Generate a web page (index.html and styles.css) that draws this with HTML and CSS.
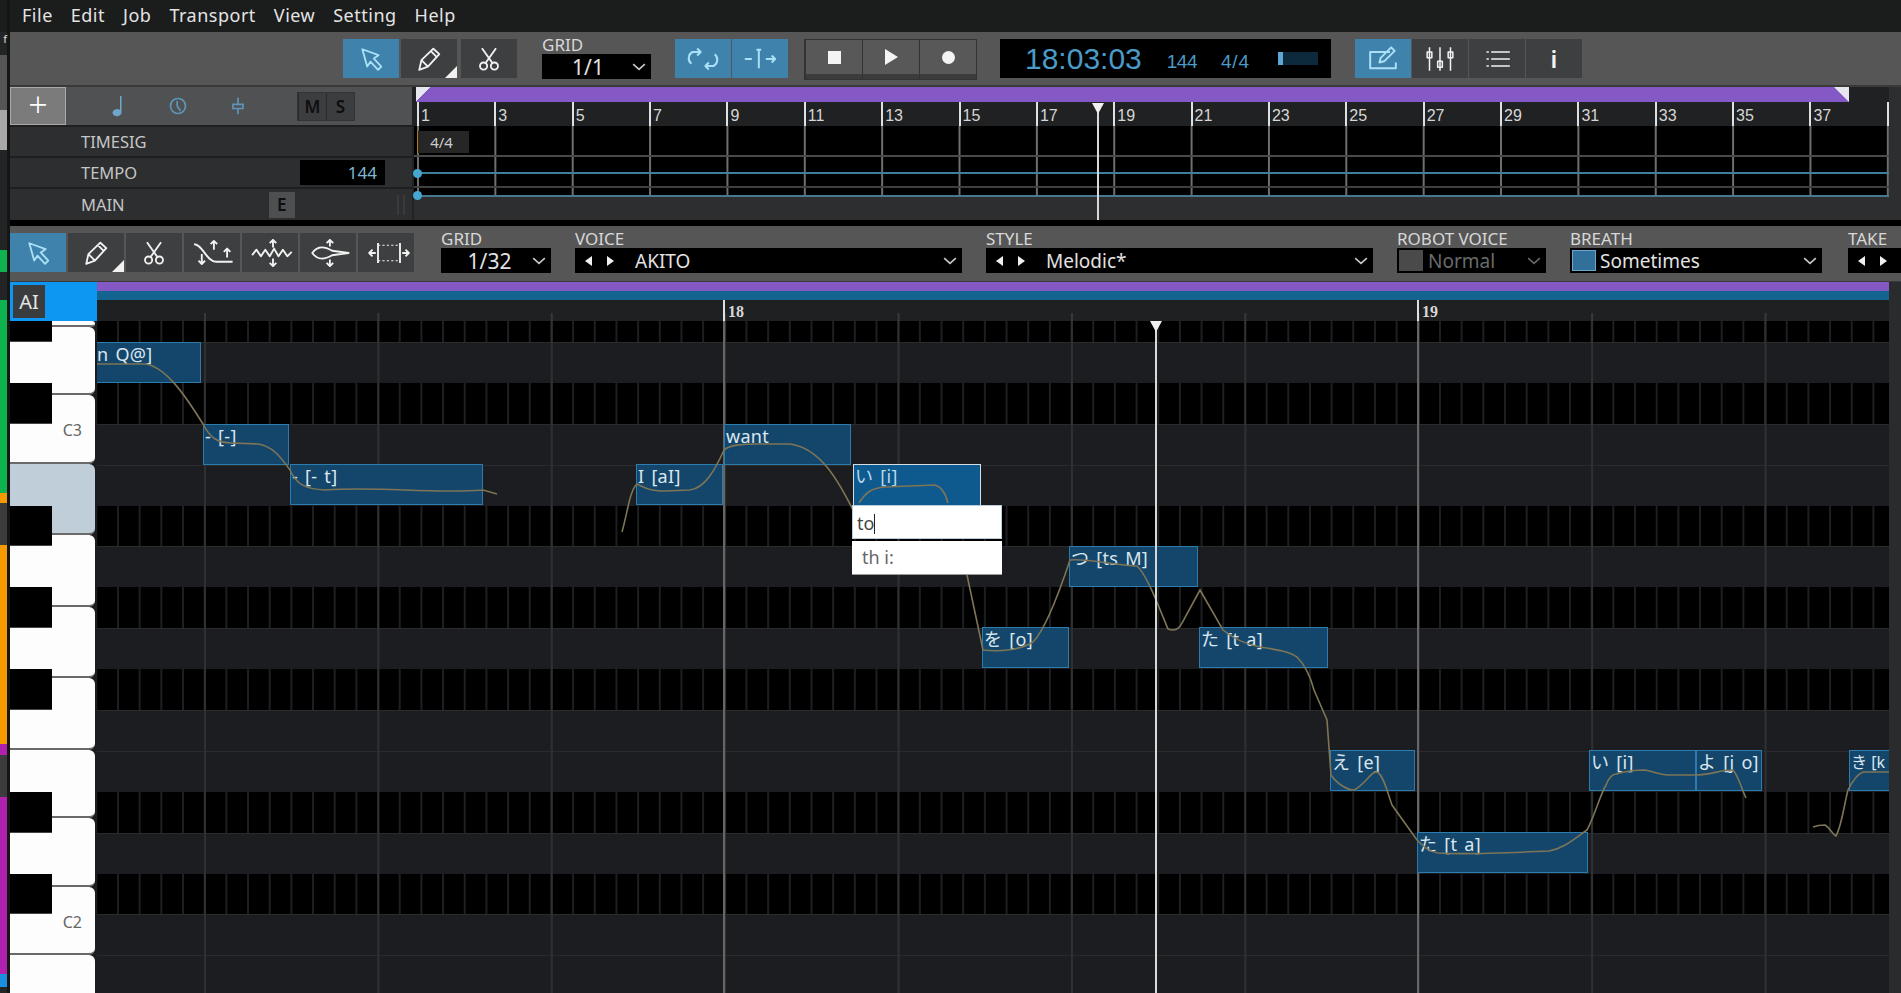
FILE: index.html
```html
<!DOCTYPE html>
<html lang="en">
<head>
    <meta charset="UTF-8">
    <meta name="viewport" content="width=device-width, initial-scale=1.0">
    <title>Piano Roll</title>
    <link rel="stylesheet" href="styles.css">
</head>
<body>
    <svg class="defs" width="0" height="0">
        <symbol id="i-arrow" viewBox="0 0 24 24"><path d="M4 3 19 8.500 14.500 11.500 21.500 19 18.500 22 11.500 14.500 8.500 19Z"/></symbol>
        <symbol id="i-pencil" viewBox="0 0 24 24"><path d="M3 22 5 13 16 2.500 21.500 7.500 11 19ZM5 13 11 19M14 5 19 10"/></symbol>
        <symbol id="i-scissors" viewBox="0 0 24 24"><circle cx="7" cy="18.500" r="3.300"/><circle cx="17" cy="18.500" r="3.300"/><path d="M9 15.500 18.500 2M15 15.500 5.500 2"/></symbol>
        <symbol id="i-chev" viewBox="0 0 12 8"><path d="M1 1.500 6 6 11 1.500"/></symbol>
    </svg>
    <div class="app">
        <div class="strip">
            <div class="s-dark s1"></div>
            <div class="s-dark s2">f</div>
            <div class="s-grey s3"></div>
            <div class="s-light s4"></div>
            <div class="s-dark s5"></div>
            <div class="s-green s6"></div>
            <div class="s-dark s7"></div>
            <div class="s-green s8"></div>
            <div class="s-orange s9"></div>
            <div class="s-mid s10"></div>
            <div class="s-orange s11"></div>
            <div class="s-magenta s12"></div>
            <div class="s-mid s10"></div>
            <div class="s-magenta s13"></div>
            <div class="s-blue s14"></div>
            <div class="s-dark s15"></div>
        </div>
        <div class="main">
            <div class="menu">
                <span>File</span><span>Edit</span><span>Job</span><span>Transport</span><span>View</span><span>Setting</span><span>Help</span>
            </div>

            <div class="toolbar">
                <div class="btn-group tools-top">
                    <div class="btn on"><svg class="ico"><use href="#i-arrow"/></svg></div>
                    <div class="btn corner"><svg class="ico"><use href="#i-pencil"/></svg></div>
                    <div class="btn gap-l"><svg class="ico"><use href="#i-scissors"/></svg></div>
                </div>
                <div class="field f-grid-top">
                    <label>GRID</label>
                    <div class="select center"><span>1/1</span><svg class="chev"><use href="#i-chev"/></svg></div>
                </div>
                <div class="btn-group loop">
                    <div class="btn on"><svg class="ico wide" viewBox="0 0 36 24"><path d="M8 16a6 6 0 0 1 1-10h7M13 3l3 3-3 3M28 8a6 6 0 0 1-1 10h-7M23 15l-3 3 3 3"/></svg></div>
                    <div class="btn on"><svg class="ico wide" viewBox="0 0 36 24"><path d="M5 12h6M17 4v16M15 4h4M23 12h8M28 9l3 3-3 3"/></svg></div>
                </div>
                <div class="transport">
                    <div class="tbtn"><i class="t-stop"></i></div>
                    <div class="tbtn"><i class="t-play"></i></div>
                    <div class="tbtn"><i class="t-rec"></i></div>
                </div>
                <div class="display">
                    <span class="clock">18:03:03</span>
                    <span class="small tempo-val">144</span>
                    <span class="small">4/4</span>
                    <div class="meter"><i></i></div>
                </div>
                <div class="btn-group panels">
                    <div class="btn on"><svg class="ico wide" viewBox="0 0 36 24"><path d="M24 6H7v14h22v-5M15 15l1-4 9-9 3 3-9 9Z"/></svg></div>
                    <div class="btn"><svg class="ico wide thin" viewBox="0 0 36 24"><path d="M9 2v20M18 2v20M27 2v20M7 6h4v5H7zM16 14h4v5h-4zM25 6h4v5h-4z"/></svg></div>
                    <div class="btn"><svg class="ico wide thin" viewBox="0 0 36 24"><path d="M13 6h16M13 12h16M13 18h16M9 6h2M9 12h2M9 18h2"/></svg></div>
                    <div class="btn info">i</div>
                </div>
            </div>

            <div class="tracks">
                <div class="track-head">
                    <div class="head-top">
                        <div class="add">+</div>
                        <svg class="hicon h-note" viewBox="0 0 16 24"><path class="fill" d="M10 2h1.500v17a4.500 3.500 0 1 1-1.500-3z"/></svg>
                        <svg class="hicon h-clock" viewBox="0 0 24 24"><circle cx="12" cy="12" r="9"/><path d="M11 6v6l4 6"/></svg>
                        <svg class="hicon h-fader" viewBox="0 0 24 24"><path d="M12 2v7M12 16v6M6 10h12v5H6z"/></svg>
                        <div class="ms"><span>M</span><span>S</span></div>
                    </div>
                    <div class="trow"><span>TIMESIG</span></div>
                    <div class="trow"><span>TEMPO</span><div class="tempo-box">144</div></div>
                    <div class="trow last"><span>MAIN</span><div class="e-btn">E</div><div class="grip"></div></div>
                </div>
                <div class="timeline">
                    <div class="loop-bar"></div>
                    <div class="bars">
                        <span>1</span><span>3</span><span>5</span><span>7</span><span>9</span><span>11</span><span>13</span><span>15</span><span>17</span><span>19</span><span>21</span><span>23</span><span>25</span><span>27</span><span>29</span><span>31</span><span>33</span><span>35</span><span>37</span><span></span>
                    </div>
                    <div class="lanes">
                        <div class="lane sig"><div class="sig-box">4/4</div></div>
                        <div class="lane tempo-lane"><i class="dot"></i></div>
                        <div class="lane main-lane"><i class="dot"></i></div>
                    </div>
                    <div class="below"></div>
                    <div class="playhead ph-top"></div>
                </div>
                <div class="tl-rail"></div>
            </div>

            <div class="black-gap"></div>

            <div class="editbar">
                <div class="btn-group tools">
                    <div class="btn on"><svg class="ico"><use href="#i-arrow"/></svg></div>
                    <div class="btn corner"><svg class="ico"><use href="#i-pencil"/></svg></div>
                    <div class="btn"><svg class="ico"><use href="#i-scissors"/></svg></div>
                    <div class="btn"><svg class="ico wide" viewBox="0 0 40 24"><path d="M1 4C9 4 12 20 21 20H36M19 9V2M16 4l3-3 3 3M31 16V9M28 11l3-3 3 3M8 13v8M5 19l3 3 3-3"/></svg></div>
                    <div class="btn"><svg class="ico wide" viewBox="0 0 40 24"><path d="M1 14 5 9 9 15 13 9 17 15 21 8 25 15 29 9 33 15 37 11M20 7V1M17 3l3-3 3 3M20 17v6M17 21l3 3 3-3"/></svg></div>
                    <div class="btn"><svg class="ico wide" viewBox="0 0 40 24"><path d="M3 12C8 5 14 6 21 10L36 12 21 14C14 18 8 19 3 12ZM19 6V1M16 3l3-3 3 3M19 18v5M16 21l3 3 3-3"/></svg></div>
                    <div class="btn"><svg class="ico wide" viewBox="0 0 40 24"><path d="M10 3v18M30 3v18M2 12h6M5 9l-3 3 3 3M32 12h6M35 9l3 3-3 3"/><path class="dash" d="M10 5h20M10 19h20"/></svg></div>
                </div>
                <div class="field f-grid"><label>GRID</label><div class="select center"><span>1/32</span><svg class="chev"><use href="#i-chev"/></svg></div></div>
                <div class="field f-voice"><label>VOICE</label><div class="select"><i class="tri l"></i><i class="tri r"></i><span>AKITO</span><svg class="chev"><use href="#i-chev"/></svg></div></div>
                <div class="field f-voice"><label>STYLE</label><div class="select"><i class="tri l"></i><i class="tri r"></i><span>Melodic*</span><svg class="chev"><use href="#i-chev"/></svg></div></div>
                <div class="field f-robot"><label>ROBOT VOICE</label><div class="select off"><b class="check"></b><span>Normal</span><svg class="chev"><use href="#i-chev"/></svg></div></div>
                <div class="field f-breath"><label>BREATH</label><div class="select cb"><b class="check blue"></b><span>Sometimes</span><svg class="chev"><use href="#i-chev"/></svg></div></div>
                <div class="field f-take"><label>TAKE</label><div class="select"><i class="tri l"></i><i class="tri r"></i></div></div>
            </div>

            <div class="roll">
                <div class="keys-col">
                    <div class="ai-box"><span>AI</span></div>
                    <div class="piano">
                        <div class="key sliver"></div>
                        <div class="key short"></div>
                        <div class="key short"><span>C3</span></div>
                        <div class="key tall picked"></div>
                        <div class="key tall"></div>
                        <div class="key tall"></div>
                        <div class="key tall"></div>
                        <div class="key short"></div>
                        <div class="key short"></div>
                        <div class="key short"><span>C2</span></div>
                        <div class="key short"></div>
                        <div class="black-keys">
                            <div class="bk"></div><div></div><div class="bk"></div><div></div><div></div><div class="bk"></div><div></div><div class="bk"></div><div></div><div class="bk"></div><div></div><div></div><div class="bk"></div><div></div><div class="bk"></div>
                        </div>
                    </div>
                </div>
                <div class="roll-body">
                    <div class="r-purple"></div>
                    <div class="r-blue"></div>
                    <div class="r-ruler">
                        <span class="mark m18">18</span>
                        <span class="mark m19">19</span>
                    </div>
                    <div class="canvas">
                        <div class="row top black"></div>
                        <div class="row"></div>
                        <div class="row black"></div>
                        <div class="row"></div>
                        <div class="row"></div>
                        <div class="row black"></div>
                        <div class="row"></div>
                        <div class="row black"></div>
                        <div class="row"></div>
                        <div class="row black"></div>
                        <div class="row"></div>
                        <div class="row"></div>
                        <div class="row black"></div>
                        <div class="row"></div>
                        <div class="row black"></div>
                        <div class="row"></div>
                        <div class="row"></div>
                        <div class="beats"></div>
                        <div class="bar-line b18"></div>
                        <div class="bar-line b19"></div>

                        <div class="note n1">n Q@]</div>
                        <div class="note n2">- [-]</div>
                        <div class="note n3">- [- t]</div>
                        <div class="note n4">I [aI]</div>
                        <div class="note n5">want</div>
                        <div class="note n6 sel">い [i]</div>
                        <div class="note n7">を [o]</div>
                        <div class="note n8">つ [ts M]</div>
                        <div class="note n9">た [t a]</div>
                        <div class="note n10">え [e]</div>
                        <div class="note n11">た [t a]</div>
                        <div class="note n12">い [i]</div>
                        <div class="note n13">よ [j o]</div>
                        <div class="note n14">き [k</div>

                        <svg class="pitch" viewBox="97 321 1792 672">
                            <path d="M97 364H145C165 366 185 395 203 424C210 438 218 443 232 443L258 444C272 446 280 456 290 470C296 484 305 489 325 490C380 486 430 494 483 490L497 494"/>
                            <path d="M622 532C628 510 630 490 637 484C645 488 650 491 665 491L690 490C705 488 715 470 724 450C730 445 740 444 760 444H790C820 448 838 480 853 510"/>
                            <path d="M859 503C866 492 872 488 885 487L935 485C942 487 946 495 948 503"/>
                            <path d="M967 575 983 650C1000 652 1020 650 1033 642C1045 630 1060 590 1070 560C1085 558 1120 566 1137 566C1147 575 1158 605 1168 629C1175 632 1180 628 1182 623L1200 590 1223 630C1235 640 1250 645 1260 647C1280 650 1290 652 1297 657C1305 665 1310 675 1314 690L1327 720 1331 775C1338 785 1348 790 1354 790C1365 785 1372 770 1377 772C1384 775 1388 795 1392 805L1417 840C1425 848 1430 852 1438 853C1470 855 1520 852 1549 851C1565 848 1575 838 1587 830C1595 815 1600 795 1606 785C1610 775 1614 774 1616 774C1630 770 1640 770 1645 770C1655 772 1660 775 1668 775H1695C1710 775 1720 770 1733 770C1738 775 1742 790 1746 798"/>
                            <path d="M1813 827C1818 825 1822 825 1825 825C1830 828 1833 835 1836 836C1842 825 1844 805 1848 790C1853 780 1858 774 1863 772H1890"/>
                        </svg>

                        <div class="lyric-input">
                            <div class="lyric-edit">to<i></i></div>
                            <div class="lyric-hint">th i:</div>
                        </div>
                        <div class="playhead ph-roll"></div>
                    </div>
                </div>
                <div class="roll-rail"></div>
            </div>
        </div>
    </div>
</body>
</html>
```
FILE: styles.css
```css
*{
    margin: 0;
    padding: 0;
    box-sizing: border-box;
}
html,body{
    height: 100%;
    overflow: hidden;
    background-color: #1b1c1c;
}
body{
    font-family: "Noto Sans", "Noto Sans CJK JP", sans-serif;
    color: #d0d0d0;
}
.defs{
    position: absolute;
}
.app{
    display: flex;
    width: 1901px;
    height: 993px;
    overflow: hidden;
}

/* left colour strip */
.strip{
    width: 10px;
    flex: none;
    display: flex;
    flex-direction: column;
    background-color: #141515;
}
.strip div{
    width: 7px;
}
.s-dark{ background-color: #232425; }
.s-grey{ background-color: #555; }
.s-light{ background-color: #a8a8a8; }
.s-green{ background-color: #0eb350; }
.s-orange{ background-color: #f59b00; }
.s-magenta{ background-color: #b022ad; }
.s-blue{ background-color: #1a8fe0; }
.s-mid{ background-color: #3c3c3c; }
.s1{ height: 32px; background-color: #1b1c1c; }
.s2{ height: 23px; font-size: 11px; line-height: 14px; text-align: right; color: #ddd; }
.s3{ height: 55px; }
.s4{ height: 40px; }
.s5{ height: 100px; }
.s6{ height: 22px; }
.s7{ height: 28px; }
.s8{ height: 193px; }
.s9{ height: 10px; }
.s10{ height: 42px; }
.s11{ height: 199px; }
.s12{ height: 11px; }
.s13{ height: 177px; }
.s14{ height: 13px; }
.s15{ flex: 1; }

.main{
    flex: 1;
    min-width: 0;
    display: flex;
    flex-direction: column;
}

/* menu */
.menu{
    height: 32px;
    flex: none;
    display: flex;
    gap: 18px;
    padding: 0 0 2px 12px;
    align-items: center;
    font-size: 18px;
    letter-spacing: 0.5px;
    color: #e4e4e4;
    background-color: #1b1c1c;
}

/* buttons */
.toolbar,.editbar{
    display: flex;
    flex: none;
    align-items: flex-start;
    padding-top: 7px;
    background-color: #565656;
}
.toolbar{
    height: 53px;
    padding-left: 333px;
}
.btn-group{
    display: flex;
    gap: 2px;
}
.btn{
    width: 56px;
    height: 39px;
    background-color: #3e3f40;
    color: #f2f2f2;
    position: relative;
    display: flex;
    align-items: center;
    justify-content: center;
}
.btn.on{
    background-color: #3f83ad;
    color: #a9e0f5;
}
.btn.gap-l{
    margin-left: 2px;
}
.btn.corner::after{
    content: "";
    position: absolute;
    right: 0;
    bottom: 0;
    border-left: 12px solid transparent;
    border-bottom: 12px solid #f2f2f2;
}
.ico{
    width: 26px;
    height: 26px;
    fill: none;
    stroke: currentColor;
    stroke-width: 1.7;
    stroke-linejoin: round;
}
.ico.wide{
    width: 44px;
    height: 28px;
}
.tools .ico.wide{
    margin-left: 6px;
}
.ico.thin{
    stroke-width: 1.3;
}
.ico .dash{
    stroke-width: 1;
    stroke-dasharray: 2 2;
}
.btn.info{
    font-size: 24px;
    font-weight: 600;
}

/* fields */
.field{
    display: flex;
    flex-direction: column;
    flex: none;
    margin-top: -3px;
}
.field label{
    height: 18px;
    line-height: 18px;
    font-size: 17px;
    color: #d8d8d8;
}
.select{
    height: 25px;
    background-color: #000;
    color: #e2e2e2;
    font-size: 19px;
    display: flex;
    align-items: center;
    padding: 0 5px 0 10px;
    gap: 8px;
    overflow: hidden;
}
.select .chev{
    width: 14px;
    height: 10px;
    margin-left: auto;
    flex: none;
    fill: none;
    stroke: #c8c8c8;
    stroke-width: 1.4;
}
.select.center{
    font-size: 21px;
}
.select.center span{
    flex: 1;
    text-align: center;
    padding-left: 4px;
}
.f-grid-top .select.center span{
    padding-left: 0;
}
.select.off{
    color: #6b6b6b;
    padding-left: 2px;
    gap: 5px;
}
.select.off .chev{
    stroke: #666;
}
.select.cb{
    padding-left: 2px;
    gap: 4px;
}
.tri{
    width: 0;
    height: 0;
    flex: none;
    border-top: 5px solid transparent;
    border-bottom: 5px solid transparent;
    margin-right: 7px;
}
.tri.l{
    border-right: 7px solid #f0f0f0;
}
.tri.r{
    border-left: 7px solid #f0f0f0;
    margin-right: 13px;
}
.check{
    width: 24px;
    height: 21px;
    flex: none;
    background-color: #4a4a4a;
}
.check.blue{
    background-color: #31709a;
    border: 1px solid #6aa9cc;
}
.f-grid-top{
    width: 109px;
    margin-left: 25px;
}
.btn-group.loop{
    margin-left: 24px;
    gap: 1px;
}
.btn-group.panels{
    margin-left: 24px;
    gap: 1px;
}
.transport{
    display: flex;
    margin-left: 16px;
    border: 1px solid #333;
}
.tbtn{
    width: 57px;
    height: 39px;
    padding-bottom: 5px;
    background: linear-gradient(#585858 0 86%, #3c3c3c 86%);
    border-left: 1px solid #333;
    display: flex;
    align-items: center;
    justify-content: center;
}
.t-stop{
    width: 13px;
    height: 13px;
    background-color: #f4f4f4;
}
.t-play{
    border-left: 13px solid #f4f4f4;
    border-top: 8px solid transparent;
    border-bottom: 8px solid transparent;
}
.t-rec{
    width: 13px;
    height: 13px;
    border-radius: 50%;
    background-color: #f4f4f4;
}
.display{
    width: 331px;
    height: 39px;
    margin-left: 23px;
    background-color: #000;
    display: flex;
    align-items: center;
    color: #4a9bc7;
    padding-left: 25px;
}
.clock{
    font-family: "Liberation Sans", sans-serif;
    font-size: 30px;
    margin-right: 25px;
}
.small{
    font-family: "Liberation Sans", sans-serif;
    font-size: 19px;
    padding-top: 6px;
    margin-right: 24px;
}
.tempo-val{
    letter-spacing: -0.5px;
}
.small + .small{
    letter-spacing: 0.8px;
}
.meter{
    width: 40px;
    height: 13px;
    margin-left: 4px;
    background-color: #0d2a3d;
}
.meter i{
    display: block;
    width: 5px;
    height: 13px;
    background-color: #5ba7cf;
}

/* track list and timeline */
.tracks{
    height: 135px;
    flex: none;
    display: flex;
    border-top: 2px solid #3a3a3a;
}
.track-head{
    width: 404px;
    flex: none;
    display: flex;
    flex-direction: column;
    background-color: #2c2e2f;
    border-right: 2px solid #222;
}
.head-top{
    height: 38px;
    display: flex;
    align-items: center;
    background-color: #505152;
    position: relative;
}
.add{
    width: 56px;
    height: 38px;
    background-color: #7b7b7b;
    border: 1px solid #aaa;
    color: #fff;
    font-size: 34px;
    line-height: 32px;
    font-weight: 300;
    text-align: center;
}
.hicon{
    width: 20px;
    height: 24px;
    fill: none;
    stroke: #5f95ba;
    stroke-width: 2;
    flex: none;
}
.hicon .fill{
    fill: #6ea6cc;
    stroke: none;
}
.h-note{ margin-left: 42px; }
.h-clock{ margin-left: 40px; }
.h-fader{ margin-left: 40px; }
.ms{
    display: flex;
    margin-left: 49px;
    background-color: #3c3d3e;
    border: 1px solid #333;
}
.ms span{
    width: 28px;
    height: 27px;
    line-height: 27px;
    text-align: center;
    color: #0e0e0e;
    font-size: 17px;
    font-weight: 600;
    border-left: 1px solid #2a2a2a;
}
.trow{
    height: 31px;
    display: flex;
    align-items: center;
    padding-left: 71px;
    font-size: 16.500px;
    color: #c6c6c6;
    border-top: 2px solid #1e1f20;
    position: relative;
}
.trow.last{
    height: 33px;
}
.tempo-box{
    width: 85px;
    height: 25px;
    margin-left: auto;
    margin-right: 27px;
    background-color: #000;
    color: #7fb8d4;
    font-size: 17px;
    line-height: 25px;
    text-align: right;
    padding-right: 8px;
}
.e-btn{
    width: 26px;
    height: 26px;
    margin-left: 144px;
    background-color: #4e4f50;
    color: #0e0e0e;
    font-size: 17px;
    font-weight: 600;
    line-height: 26px;
    text-align: center;
}
.grip{
    width: 8px;
    height: 20px;
    margin-left: auto;
    margin-right: 7px;
    border-left: 2px solid #3a3a3a;
    border-right: 2px solid #3a3a3a;
}
.timeline{
    width: 1475px;
    flex: none;
    position: relative;
    display: flex;
    flex-direction: column;
    background-color: #202122;
}
.loop-bar{
    height: 15px;
    width: 1433px;
    margin-left: 2px;
    background: linear-gradient(135deg, #e6e6ee 0 10px, #8459c5 10px);
    position: relative;
    flex: none;
}
.loop-bar::after{
    content: "";
    position: absolute;
    right: 0;
    top: 0;
    border-left: 15px solid transparent;
    border-top: 15px solid #e6e6ee;
}
.bars{
    height: 24px;
    flex: none;
    display: flex;
    padding-left: 3px;
    background-color: #202122;
}
.bars span{
    width: 77.37px;
    flex: none;
    border-left: 2px solid #e0e0e0;
    padding-left: 2px;
    font-family: "Liberation Sans", sans-serif;
    font-size: 16px;
    line-height: 27px;
    color: #d6d6d6;
}
.lanes{
    flex: none;
    background-color: #000;
    position: relative;
}
.lanes::before{
    content: "";
    position: absolute;
    inset: 0;
    background: linear-gradient(90deg, #6f6f6f 0 2px, transparent 2px) 3px 0 / 77.37px 100%;
}
.lane{
    position: relative;
}
.lane.sig{
    height: 31px;
    padding-top: 5px;
    border-bottom: 2px solid #4a4a4a;
}
.lane.tempo-lane{
    height: 31px;
    border-bottom: 2px solid #3f3f3f;
    background: linear-gradient(transparent 15px, #3f7f9e 15px 17px, transparent 17px);
}
.lane.main-lane{
    height: 9px;
    border-bottom: 2px solid #47788f;
}
.sig-box{
    width: 52px;
    height: 22px;
    margin-left: 3px;
    border-left: 1px solid #b07a20;
    background-color: #262626;
    font-size: 15px;
    line-height: 22px;
    text-align: center;
    color: #ccc;
    position: relative;
    padding-right: 4px;
}
.dot{
    position: absolute;
    left: -1px;
    width: 9px;
    height: 9px;
    border-radius: 50%;
    background-color: #46a8d2;
}
.tempo-lane .dot{
    top: 12px;
}
.main-lane .dot{
    top: 3px;
}
.below{
    flex: 1;
    background-color: #2c2e2f;
}
.tl-rail{
    flex: 1;
    background-color: #2c2e2f;
}
.playhead{
    position: absolute;
    width: 2px;
    background-color: #d8d8d8;
}
.playhead::before{
    content: "";
    position: absolute;
    left: -5px;
    top: 0;
    border-left: 6px solid transparent;
    border-right: 6px solid transparent;
    border-top: 11px solid #f0f0f0;
}
.ph-top{
    left: 683px;
    top: 16px;
    height: 117px;
}
.black-gap{
    height: 6px;
    flex: none;
    background-color: #000;
}
.editbar{
    height: 55px;
    gap: 24px;
}
.tools{
    width: 404px;
    gap: 2px;
    flex: none;
    margin-right: 3px;
}
.f-grid{ width: 110px; }
.f-voice{ width: 387px; }
.f-robot{ width: 149px; }
.f-breath{ width: 252px; }
.f-take{ width: 60px; margin-left: 2px; }

/* piano roll */
.roll{
    flex: 1;
    min-height: 0;
    display: flex;
    background-color: #1c1d20;
    border-top: 1px solid #3a3a3a;
}
.keys-col{
    width: 87px;
    flex: none;
    display: flex;
    flex-direction: column;
    background-color: #3a3a3a;
}
.ai-box{
    height: 39px;
    flex: none;
    background-color: #0d97f2;
    padding: 3px 0 0 3px;
}
.ai-box span{
    display: block;
    width: 32px;
    height: 33px;
    background-color: #3b3c3d;
    color: #e4e4e4;
    font-size: 20px;
    line-height: 33px;
    text-align: center;
}
.piano{
    flex: 1;
    min-height: 0;
    position: relative;
    overflow: hidden;
    padding-right: 2px;
    display: flex;
    flex-direction: column;
    background-color: #1c1d20;
}
.key{
    flex: none;
    background-color: #fdfdfd;
    border-radius: 0 6px 6px 0;
    border-bottom: 2px solid #6a6a6a;
    display: flex;
    align-items: center;
    justify-content: flex-end;
    padding: 4px 13px 0 0;
    color: #666;
    font-size: 16px;
}
.key.sliver{ height: 6px; }
.key.short{ height: 68.3px; }
.key.tall{ height: 71.6px; }
.key.picked{ background-color: #bfced9; }
.black-keys{
    position: absolute;
    left: 0;
    top: 0;
    display: grid;
    width: 42px;
    grid-template-rows: 21px repeat(14, 40.9px);
}
.bk{
    background-color: #000;
    border-bottom: 1px solid #444;
}
.roll-body{
    width: 1792px;
    flex: none;
    display: flex;
    flex-direction: column;
    min-height: 0;
}
.r-purple{
    height: 9px;
    flex: none;
    background-color: #8459c5;
}
.r-blue{
    height: 9px;
    flex: none;
    background-color: #15638f;
}
.r-ruler{
    height: 21px;
    flex: none;
    position: relative;
    background: linear-gradient(90deg, #38393b 0 2px, transparent 2px) 107px 13px / 173.4px 8px repeat-x, #1f2021;
}
.mark{
    position: absolute;
    top: 0;
    height: 21px;
    padding-left: 3px;
    border-left: 2px solid #e0e0e0;
    font-family: "Liberation Serif", serif;
    font-size: 16px;
    font-weight: 700;
    line-height: 23px;
    color: #d8d8d8;
}
.m18{ left: 626px; }
.m19{ left: 1320px; }
.canvas{
    flex: 1;
    min-height: 0;
    position: relative;
    overflow: hidden;
}
.row{
    height: 40.9px;
    border-top: 1px solid #2a2b2d;
    background-color: #1c1d20;
}
.row.top{
    height: 21px;
    border-top: none;
}
.row.black{
    border-top: none;
    background: linear-gradient(90deg, #1e1f22 0 2px, #000 2px) 20px 0 / 21.68px 100%;
}
.beats{
    position: absolute;
    inset: 0;
    background: linear-gradient(90deg, #2f3032 0 2px, transparent 2px) 107px 0 / 173.4px 100%;
}
.bar-line{
    position: absolute;
    top: 0;
    bottom: 0;
    width: 2px;
    background-color: #666;
}
.b18{ left: 626px; }
.b19{ left: 1320px; }
.note{
    position: absolute;
    height: 41px;
    padding-left: 1px;
    background-color: #14466b;
    border: 1px solid #2c7cae;
    color: #dbe6ee;
    font-size: 18px;
    word-spacing: 2px;
    letter-spacing: 0.3px;
    line-height: 22px;
    white-space: nowrap;
    overflow: hidden;
}
.note.sel{
    background-color: #0e5a8e;
    border: 1px solid #d4dde4;
    border-bottom: none;
    color: #b9d8ea;
}
.n1{ left: 0; top: 21px; width: 104px; border-left: none; padding-left: 0; }
.n2{ left: 106px; top: 103px; width: 86px; }
.n3{ left: 193px; top: 143px; width: 193px; }
.n4{ left: 539px; top: 143px; width: 87px; }
.n5{ left: 627px; top: 103px; width: 127px; }
.n6{ left: 756px; top: 143px; width: 128px; }
.n7{ left: 885px; top: 306px; width: 87px; }
.n8{ left: 972px; top: 225px; width: 129px; }
.n9{ left: 1102px; top: 306px; width: 129px; }
.n10{ left: 1233px; top: 429px; width: 85px; }
.n11{ left: 1320px; top: 511px; width: 171px; }
.n12{ left: 1492px; top: 429px; width: 107px; }
.n13{ left: 1599px; top: 429px; width: 66px; }
.n14{ left: 1752px; top: 429px; width: 40px; border-right: none; font-size: 16px; word-spacing: 0; letter-spacing: 0; }
.pitch{
    position: absolute;
    left: 0;
    top: 0;
    width: 1792px;
    height: 672px;
    fill: none;
    stroke: #7d7556;
    stroke-width: 1.6;
}
.lyric-input{
    position: absolute;
    left: 755px;
    top: 184px;
    width: 150px;
    display: flex;
    flex-direction: column;
    gap: 2px;
}
.lyric-edit,.lyric-hint{
    background-color: #fff;
    font-size: 18px;
}
.lyric-edit{
    height: 34px;
    line-height: 34px;
    padding-left: 4px;
    color: #444;
    border: 1px solid #bcd;
}
.lyric-edit i{
    display: inline-block;
    width: 1px;
    height: 20px;
    margin-left: 0;
    background-color: #222;
    vertical-align: -4px;
}
.lyric-hint{
    height: 34px;
    line-height: 32px;
    padding-left: 10px;
    color: #666;
    border-bottom: 1px solid #999;
}
.ph-roll{
    left: 1058px;
    top: 0;
    bottom: 0;
}
.roll-rail{
    flex: 1;
    background-color: #2a2b2d;
}
```
